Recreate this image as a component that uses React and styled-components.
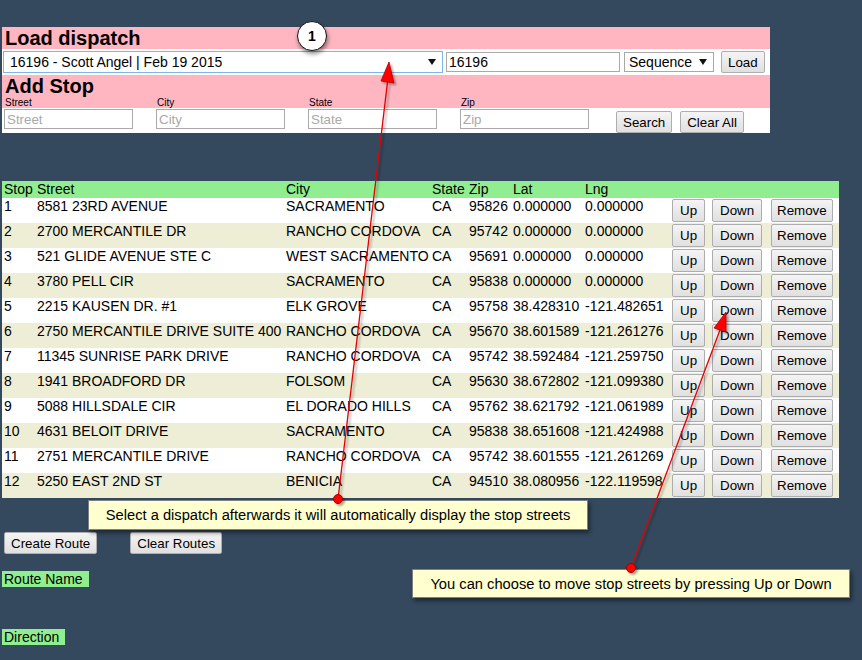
import React from "react";
import styled, { createGlobalStyle } from "styled-components";

const GlobalStyle = createGlobalStyle`
  html, body {
    margin: 0;
    background: #34495e;
  }
  body {
    font-family: "Liberation Sans", Arial, sans-serif;
    font-size: 14px;
    color: #000;
  }
`;

const Page = styled.div`
  position: relative;
  width: 862px;
  height: 660px;
  padding: 27px 0 0 2px;
  box-sizing: border-box;
  overflow: hidden;
`;

const Panel = styled.div`
  width: 768px;
  background: #fff;
`;

const PinkBand = styled.div`
  background: #ffb6c1;
`;

const Heading = styled.h2`
  margin: 0;
  padding-left: 3px;
  font-size: 20px;
  font-weight: bold;
  line-height: ${(p) => p.$lh || 22}px;
`;

const LoadRow = styled.div`
  display: flex;
  align-items: center;
  height: 26px;
  padding-left: 1px;
`;

const SelectBox = styled.div`
  display: flex;
  align-items: center;
  justify-content: space-between;
  box-sizing: border-box;
  width: ${(p) => p.$w}px;
  height: ${(p) => p.$h}px;
  margin-right: ${(p) => p.$mr || 0}px;
  padding: 0 6px 0 ${(p) => p.$pl || 5}px;
  border: 1px solid ${(p) => (p.$focus ? "#7eb4ea" : "#a9a9a9")};
  background: #fff;
  font-size: 14px;
  white-space: nowrap;
`;

const Caret = () => (
  <svg width="8" height="6" viewBox="0 0 8 6">
    <polygon points="0,0 8,0 4,6" fill="#111" />
  </svg>
);

const TextBox = styled.input`
  box-sizing: border-box;
  width: ${(p) => p.$w}px;
  height: ${(p) => p.$h}px;
  margin: 0 ${(p) => p.$mr || 0}px 0 0;
  padding: 0 2px;
  border: 1px solid #a9a9a9;
  border-radius: 0;
  outline: none;
  font: ${(p) => p.$fs || 14}px "Liberation Sans", Arial, sans-serif;
  color: #000;
  background: #fff;

  &::placeholder {
    color: #a9a9a9;
  }
`;

const Btn = styled.button`
  box-sizing: border-box;
  height: ${(p) => p.$h || 22}px;
  margin: 0;
  padding: 0 ${(p) => p.$px || 6}px;
  border: 1px solid #adadad;
  border-radius: 2px;
  background: linear-gradient(#f4f4f4, #e0e0e0);
  color: #000;
  font: 13.33px "Liberation Sans", Arial, sans-serif;
  white-space: nowrap;
  cursor: pointer;
`;

const LabelRow = styled.div`
  display: flex;
  padding-left: 3px;
  height: 10px;
`;

const FieldLabel = styled.label`
  width: 152px;
  font-size: 10px;
  line-height: 10px;
`;

const FieldsRow = styled.div`
  display: flex;
  align-items: flex-start;
  height: 25px;
  padding-left: 2px;
`;

const FieldCell = styled.div`
  width: 152px;
  padding-top: 1px;
`;

const ButtonGroup = styled.div`
  display: flex;
  gap: 8px;
  padding-top: 3px;
  margin-left: 4px;
`;

const StopTable = styled.table`
  margin-top: 48px;
  width: 837px;
  border-collapse: collapse;
  table-layout: fixed;
  font-size: 14px;
`;

const Th = styled.th`
  height: 17px;
  padding: 0 0 0 2px;
  background: #90ee90;
  font-weight: normal;
  text-align: left;
  line-height: 17px;
  white-space: nowrap;
`;

const Row = styled.tr`
  background: ${(p) => (p.$alt ? "#eeeed6" : "#fff")};
`;

const Td = styled.td`
  padding: 0 0 0 2px;
  vertical-align: top;
  line-height: 16px;
  white-space: nowrap;
  overflow: visible;
`;

const BtnTd = styled.td`
  padding: 1px 0 1px 2px;
  vertical-align: top;
`;

const ActionRow = styled.div`
  display: flex;
  gap: 33px;
  margin: 34px 0 0 2px;
`;

const Tag = styled.div`
  display: inline-block;
  margin-top: ${(p) => p.$mt}px;
  padding: 0 6px 0 2px;
  background: #90ee90;
  line-height: 16px;
`;

const TagLine = styled.div``;

const Badge = styled.div`
  position: absolute;
  left: 297px;
  top: 21px;
  width: 30px;
  height: 30px;
  box-sizing: border-box;
  border: 1.5px solid #111;
  border-radius: 50%;
  background: #fff;
  box-shadow: 1px 3px 4px rgba(0, 0, 0, 0.45);
  display: flex;
  align-items: center;
  justify-content: center;
  font-weight: bold;
  font-size: 14px;
`;

const Callout = styled.div`
  position: absolute;
  left: ${(p) => p.$x}px;
  top: ${(p) => p.$y}px;
  width: ${(p) => p.$w}px;
  height: ${(p) => p.$h}px;
  box-sizing: border-box;
  border: 1px solid #808080;
  background: #ffffd0;
  box-shadow: 2px 3px 4px rgba(0, 0, 0, 0.45);
  display: flex;
  align-items: center;
  justify-content: center;
  font-size: 14.7px;
  white-space: nowrap;
`;

const Overlay = styled.svg`
  position: absolute;
  left: 0;
  top: 0;
  pointer-events: none;
`;

const stops = [
  ["1", "8581 23RD AVENUE", "SACRAMENTO", "CA", "95826", "0.000000", "0.000000"],
  ["2", "2700 MERCANTILE DR", "RANCHO CORDOVA", "CA", "95742", "0.000000", "0.000000"],
  ["3", "521 GLIDE AVENUE STE C", "WEST SACRAMENTO", "CA", "95691", "0.000000", "0.000000"],
  ["4", "3780 PELL CIR", "SACRAMENTO", "CA", "95838", "0.000000", "0.000000"],
  ["5", "2215 KAUSEN DR. #1", "ELK GROVE", "CA", "95758", "38.428310", "-121.482651"],
  ["6", "2750 MERCANTILE DRIVE SUITE 400", "RANCHO CORDOVA", "CA", "95670", "38.601589", "-121.261276"],
  ["7", "11345 SUNRISE PARK DRIVE", "RANCHO CORDOVA", "CA", "95742", "38.592484", "-121.259750"],
  ["8", "1941 BROADFORD DR", "FOLSOM", "CA", "95630", "38.672802", "-121.099380"],
  ["9", "5088 HILLSDALE CIR", "EL DORADO HILLS", "CA", "95762", "38.621792", "-121.061989"],
  ["10", "4631 BELOIT DRIVE", "SACRAMENTO", "CA", "95838", "38.651608", "-121.424988"],
  ["11", "2751 MERCANTILE DRIVE", "RANCHO CORDOVA", "CA", "95742", "38.601555", "-121.261269"],
  ["12", "5250 EAST 2ND ST", "BENICIA", "CA", "94510", "38.080956", "-122.119598"],
];

const colWidths = [33, 249, 146, 37, 44, 72, 87, 40, 59, 70];

const Arrow = ({ from, tip, base1, base2 }) => (
  <g filter="url(#shadow)">
    <line x1={from[0]} y1={from[1]} x2={(base1[0] + base2[0]) / 2} y2={(base1[1] + base2[1]) / 2} stroke="#e00000" strokeWidth="1.3" />
    <polygon points={`${tip[0]},${tip[1]} ${base1[0]},${base1[1]} ${base2[0]},${base2[1]}`} fill="#ff0000" stroke="#b00000" strokeWidth="0.8" />
    <circle cx={from[0]} cy={from[1]} r="4.5" fill="#ff0000" stroke="#a00000" strokeWidth="1" />
  </g>
);

export default function App() {
  return (
    <Page>
      <GlobalStyle />
      <Panel>
        <PinkBand>
          <Heading>Load dispatch</Heading>
        </PinkBand>
        <LoadRow>
          <SelectBox $w={440} $h={22} $mr={3} $pl={6} $focus>
            <span>16196 - Scott Angel | Feb 19 2015</span>
            <Caret />
          </SelectBox>
          <TextBox $w={174} $h={20} $mr={4} defaultValue="16196" />
          <SelectBox $w={90} $h={20} $mr={7} $pl={4}>
            <span>Sequence</span>
            <Caret />
          </SelectBox>
          <Btn>Load</Btn>
        </LoadRow>
        <PinkBand>
          <Heading $lh={23}>Add Stop</Heading>
          <LabelRow>
            <FieldLabel>Street</FieldLabel>
            <FieldLabel>City</FieldLabel>
            <FieldLabel>State</FieldLabel>
            <FieldLabel>Zip</FieldLabel>
          </LabelRow>
        </PinkBand>
        <FieldsRow>
          {["Street", "City", "State", "Zip"].map((f) => (
            <FieldCell key={f}>
              <TextBox $w={129} $h={20} $fs={13.33} placeholder={f} />
            </FieldCell>
          ))}
          <ButtonGroup>
            <Btn>Search</Btn>
            <Btn>Clear All</Btn>
          </ButtonGroup>
        </FieldsRow>
      </Panel>

      <StopTable>
        <colgroup>
          {colWidths.map((w, i) => (
            <col key={i} style={{ width: w }} />
          ))}
        </colgroup>
        <thead>
          <tr>
            {["Stop", "Street", "City", "State", "Zip", "Lat", "Lng", "", "", ""].map((h, i) => (
              <Th key={i}>{h}</Th>
            ))}
          </tr>
        </thead>
        <tbody>
          {stops.map((s, i) => (
            <Row key={s[0]} $alt={i % 2 === 1}>
              {s.map((v, j) => (
                <Td key={j}>{v}</Td>
              ))}
              <BtnTd>
                <Btn $h={23} $px={7}>Up</Btn>
              </BtnTd>
              <BtnTd>
                <Btn $h={23} $px={7}>Down</Btn>
              </BtnTd>
              <BtnTd>
                <Btn $h={23} $px={5}>Remove</Btn>
              </BtnTd>
            </Row>
          ))}
        </tbody>
      </StopTable>

      <ActionRow>
        <Btn>Create Route</Btn>
        <Btn>Clear Routes</Btn>
      </ActionRow>
      <TagLine>
        <Tag $mt={17}>Route Name</Tag>
      </TagLine>
      <TagLine>
        <Tag $mt={42}>Direction</Tag>
      </TagLine>

      <Badge>1</Badge>
      <Callout $x={88} $y={500} $w={500} $h={30}>
        Select a dispatch afterwards it will automatically display the stop streets
      </Callout>
      <Callout $x={412} $y={569} $w={438} $h={29}>
        You can choose to move stop streets by pressing Up or Down
      </Callout>

      <Overlay width="862" height="660" viewBox="0 0 862 660">
        <defs>
          <filter id="shadow" x="-20%" y="-20%" width="140%" height="140%">
            <feDropShadow dx="2" dy="2" stdDeviation="1.2" floodColor="#000" floodOpacity="0.35" />
          </filter>
        </defs>
        <Arrow from={[338, 499]} tip={[389, 62]} base1={[381, 81]} base2={[394, 83]} />
        <Arrow from={[631, 568]} tip={[726, 312]} base1={[714, 328]} base2={[726, 332]} />
      </Overlay>
    </Page>
  );
}
